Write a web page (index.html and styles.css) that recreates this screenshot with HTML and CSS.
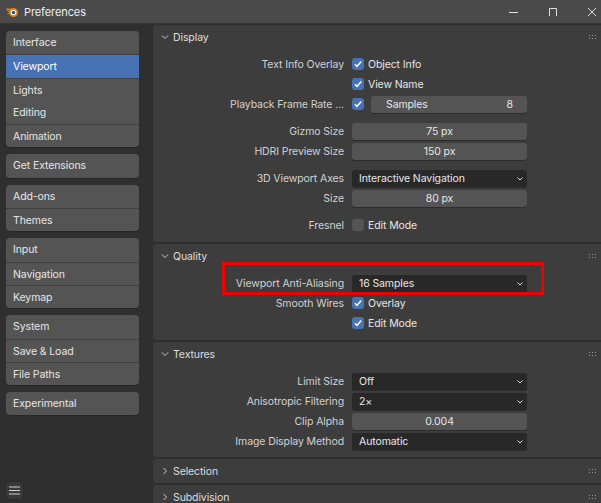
FILE: index.html
```html
<!DOCTYPE html>
<html lang="en">
<head>
    <meta charset="UTF-8">
    <title>Preferences</title>
    <link rel="stylesheet" href="styles.css">
</head>
<body>
<header class="titlebar">
    <svg class="logo" width="14" height="12" viewBox="0 0 14 12">
        <path d="M0.5 2.5 H6 L7 4 L2.5 4.5 L6 5.5 L1.5 8 L5 7.5 Z" fill="#e87d0d"/>
        <circle cx="8.5" cy="6.5" r="4.5" fill="#e87d0d"/>
        <circle cx="8.5" cy="6.5" r="2.8" fill="#ffffff"/>
        <circle cx="8.5" cy="6.5" r="1.7" fill="#265787"/>
    </svg>
    <span class="title">Preferences</span>
    <div class="win-controls">
        <svg width="10" height="10" viewBox="0 0 10 10"><path d="M0 5.5 H9" stroke="#e0e0e0" stroke-width="1"/></svg>
        <svg width="10" height="10" viewBox="0 0 10 10"><path d="M1.5 9 V1.5 H8.5 V9" fill="none" stroke="#e0e0e0" stroke-width="1"/></svg>
        <svg width="10" height="10" viewBox="0 0 10 10"><path d="M1 1 L9 9 M9 1 L1 9" stroke="#e0e0e0" stroke-width="1"/></svg>
    </div>
</header>

<div class="main">
    <nav class="sidebar">
        <div class="nav-group">
            <div class="nav-item">Interface</div>
            <div class="nav-item active">Viewport</div>
            <div class="nav-item no-sep">Lights</div>
            <div class="nav-item">Editing</div>
            <div class="nav-item">Animation</div>
        </div>
        <div class="nav-group">
            <div class="nav-item">Get Extensions</div>
        </div>
        <div class="nav-group">
            <div class="nav-item">Add-ons</div>
            <div class="nav-item">Themes</div>
        </div>
        <div class="nav-group">
            <div class="nav-item">Input</div>
            <div class="nav-item">Navigation</div>
            <div class="nav-item">Keymap</div>
        </div>
        <div class="nav-group">
            <div class="nav-item">System</div>
            <div class="nav-item">Save &amp; Load</div>
            <div class="nav-item">File Paths</div>
        </div>
        <div class="nav-group">
            <div class="nav-item">Experimental</div>
        </div>

        <div class="menu-btn">
            <svg width="11" height="9" viewBox="0 0 11 9"><path d="M0 1 H11 M0 4.5 H11 M0 8 H11" stroke="#cfcfcf" stroke-width="1"/></svg>
        </div>
    </nav>

    <div class="content">
        <!-- Display -->
        <section class="panel">
            <div class="panel-header">
                <svg class="chevron" width="8" height="6" viewBox="0 0 8 6"><path d="M1 1.5 L4 4.5 L7 1.5" fill="none" stroke="#cccccc" stroke-width="1"/></svg>
                <span>Display</span>
                <svg class="grip" width="7" height="4" viewBox="0 0 7 4"><path d="M0 0h1v1h-1zM3 0h1v1h-1zM6 0h1v1h-1zM0 3h1v1h-1zM3 3h1v1h-1zM6 3h1v1h-1z" fill="#9a9a9a"/></svg>
            </div>
            <div class="panel-body">
                <div class="prop-group">
                    <div class="prop-row">
                        <div class="prop-label">Text Info Overlay</div>
                        <label class="check"><span class="box on"></span>Object Info</label>
                    </div>
                    <div class="prop-row">
                        <div class="prop-label"></div>
                        <label class="check"><span class="box on"></span>View Name</label>
                    </div>
                    <div class="prop-row">
                        <div class="prop-label">Playback Frame Rate ...</div>
                        <div class="split">
                            <span class="box on"></span>
                            <div class="field num-split"><span>Samples</span><span>8</span></div>
                        </div>
                    </div>
                </div>
                <div class="prop-group">
                    <div class="prop-row">
                        <div class="prop-label">Gizmo Size</div>
                        <div class="field">75 px</div>
                    </div>
                    <div class="prop-row">
                        <div class="prop-label">HDRI Preview Size</div>
                        <div class="field">150 px</div>
                    </div>
                </div>
                <div class="prop-group">
                    <div class="prop-row">
                        <div class="prop-label">3D Viewport Axes</div>
                        <div class="dropdown">Interactive Navigation</div>
                    </div>
                    <div class="prop-row">
                        <div class="prop-label">Size</div>
                        <div class="field">80 px</div>
                    </div>
                </div>
                <div class="prop-group">
                    <div class="prop-row">
                        <div class="prop-label">Fresnel</div>
                        <label class="check"><span class="box"></span>Edit Mode</label>
                    </div>
                </div>
            </div>
        </section>

        <!-- Quality -->
        <section class="panel">
            <div class="panel-header">
                <svg class="chevron" width="8" height="6" viewBox="0 0 8 6"><path d="M1 1.5 L4 4.5 L7 1.5" fill="none" stroke="#cccccc" stroke-width="1"/></svg>
                <span>Quality</span>
                <svg class="grip" width="7" height="4" viewBox="0 0 7 4"><path d="M0 0h1v1h-1zM3 0h1v1h-1zM6 0h1v1h-1zM0 3h1v1h-1zM3 3h1v1h-1zM6 3h1v1h-1z" fill="#9a9a9a"/></svg>
            </div>
            <div class="panel-body">
                <div class="prop-row highlighted">
                    <div class="prop-label">Viewport Anti-Aliasing</div>
                    <div class="dropdown">16 Samples</div>
                    <div class="red-box"></div>
                </div>
                <div class="prop-row">
                    <div class="prop-label">Smooth Wires</div>
                    <label class="check"><span class="box on"></span>Overlay</label>
                </div>
                <div class="prop-row">
                    <div class="prop-label"></div>
                    <label class="check"><span class="box on"></span>Edit Mode</label>
                </div>
            </div>
        </section>

        <!-- Textures -->
        <section class="panel">
            <div class="panel-header">
                <svg class="chevron" width="8" height="6" viewBox="0 0 8 6"><path d="M1 1.5 L4 4.5 L7 1.5" fill="none" stroke="#cccccc" stroke-width="1"/></svg>
                <span>Textures</span>
                <svg class="grip" width="7" height="4" viewBox="0 0 7 4"><path d="M0 0h1v1h-1zM3 0h1v1h-1zM6 0h1v1h-1zM0 3h1v1h-1zM3 3h1v1h-1zM6 3h1v1h-1z" fill="#9a9a9a"/></svg>
            </div>
            <div class="panel-body tight">
                <div class="prop-row">
                    <div class="prop-label">Limit Size</div>
                    <div class="dropdown">Off</div>
                </div>
                <div class="prop-row">
                    <div class="prop-label">Anisotropic Filtering</div>
                    <div class="dropdown">2×</div>
                </div>
                <div class="prop-row">
                    <div class="prop-label">Clip Alpha</div>
                    <div class="field">0.004</div>
                </div>
                <div class="prop-row">
                    <div class="prop-label">Image Display Method</div>
                    <div class="dropdown">Automatic</div>
                </div>
            </div>
        </section>

        <!-- collapsed panels -->
        <section class="panel">
            <div class="panel-header">
                <svg class="chevron" width="8" height="8" viewBox="0 0 8 8"><path d="M2.5 1 L5.5 4 L2.5 7" fill="none" stroke="#cccccc" stroke-width="1"/></svg>
                <span>Selection</span>
                <svg class="grip" width="7" height="4" viewBox="0 0 7 4"><path d="M0 0h1v1h-1zM3 0h1v1h-1zM6 0h1v1h-1zM0 3h1v1h-1zM3 3h1v1h-1zM6 3h1v1h-1z" fill="#9a9a9a"/></svg>
            </div>
        </section>
        <section class="panel">
            <div class="panel-header">
                <svg class="chevron" width="8" height="8" viewBox="0 0 8 8"><path d="M2.5 1 L5.5 4 L2.5 7" fill="none" stroke="#cccccc" stroke-width="1"/></svg>
                <span>Subdivision</span>
                <svg class="grip" width="7" height="4" viewBox="0 0 7 4"><path d="M0 0h1v1h-1zM3 0h1v1h-1zM6 0h1v1h-1zM0 3h1v1h-1zM3 3h1v1h-1zM6 3h1v1h-1z" fill="#9a9a9a"/></svg>
            </div>
        </section>
    </div>
</div>
</body>
</html>
```

FILE: styles.css
```css
/* Base */
body {
    margin: 0;
    height: 503px;
    overflow: hidden;
    background-color: #2f2f2f;
    color: #e6e6e6;
    font-family: Inter, "DejaVu Sans", sans-serif;
    font-size: 10.5px;
    letter-spacing: -0.1px;
}

/* Title bar */
.titlebar {
    display: flex;
    align-items: center;
    height: 24px;
    padding-left: 5px;
    background-color: #4a4a4a;
    border-bottom: 1px solid #333333;
    box-sizing: border-box;
}

.titlebar .title {
    margin-left: 5px;
    color: #eeeeee;
    font-size: 11px;
}

.win-controls {
    display: flex;
    margin-left: auto;
    gap: 29px;
    padding-right: 4px;
}

/* Main layout */
.main {
    display: flex;
    height: 479px;
}

.sidebar {
    display: flex;
    flex-direction: column;
    gap: 7px;
    width: 133px;
    padding: 7px 14px 0 6px;
}

.nav-group {
    background-color: #545454;
    border-radius: 4px;
    overflow: hidden;
    box-shadow: 0 1px 0 #262626;
}

.nav-item {
    height: 23.3px;
    line-height: 23px;
    padding-left: 7px;
    box-sizing: border-box;
    border-top: 1px solid #3f3f3f;
}

.nav-item:first-child,
.nav-item.no-sep + .nav-item {
    border-top: none;
}

.nav-item.active {
    background-color: #4772b3;
    color: #ffffff;
}

.menu-btn {
    display: flex;
    align-items: center;
    justify-content: center;
    width: 17px;
    height: 17px;
    margin-top: auto;
    margin-bottom: 4px;
    background-color: #393939;
    border-radius: 4px;
    box-shadow: 0 0 0 1px #2a2a2a;
}

/* Panels */
.content {
    flex: 1;
    padding-top: 1px;
    margin-right: -7px;
}

.panel {
    background-color: #3d3d3d;
    border-radius: 4px;
    margin-bottom: 2px;
}

.panel-header {
    display: flex;
    align-items: center;
    height: 24px;
    padding-left: 8px;
    padding-right: 12px;
    color: #dddddd;
}

.panel-header .chevron {
    margin-right: 4px;
}

.panel-header .grip {
    margin-left: auto;
}

.panel-body {
    padding: 5px 0 7px;
}

.panel-body.tight {
    padding-bottom: 6px;
}

.prop-group + .prop-group {
    margin-top: 7px;
}

.prop-row {
    display: grid;
    grid-template-columns: 191px 175px;
    column-gap: 8px;
    align-items: center;
    height: 20px;
}

.prop-label {
    text-align: right;
    color: #d2d2d2;
    white-space: nowrap;
}

/* Widgets */
.box {
    display: inline-block;
    width: 12px;
    height: 12px;
    border-radius: 3px;
    background-color: #545454;
    box-sizing: border-box;
    flex-shrink: 0;
}

.box.on {
    background-color: #4772b3;
    background-image: url("data:image/svg+xml,%3Csvg xmlns='http://www.w3.org/2000/svg' width='12' height='12' viewBox='0 0 12 12'%3E%3Cpath d='M3 6.2 L5 8.4 L9.2 3.4' fill='none' stroke='white' stroke-width='1.5'/%3E%3C/svg%3E");
}

.check {
    display: flex;
    align-items: center;
    gap: 4px;
    color: #e6e6e6;
}

.split {
    display: flex;
    align-items: center;
    gap: 7px;
}

.field,
.dropdown {
    height: 17px;
    line-height: 17px;
    border-radius: 3px;
    box-sizing: border-box;
    box-shadow: 0 1px 0 #2c2c2c;
}

.field {
    background-color: #545454;
    text-align: center;
}

.num-split {
    flex: 1;
    display: flex;
    justify-content: space-between;
    padding: 0 14px 0 15px;
}

.dropdown {
    position: relative;
    background-color: #282828;
    padding-left: 7px;
}

.dropdown::after {
    content: "";
    position: absolute;
    right: 4px;
    top: 6px;
    width: 6px;
    height: 5px;
    background-image: url("data:image/svg+xml,%3Csvg xmlns='http://www.w3.org/2000/svg' width='6' height='5' viewBox='0 0 6 5'%3E%3Cpath d='M0.5 1.5 L3 4 L5.5 1.5' fill='none' stroke='%23dddddd' stroke-width='1'/%3E%3C/svg%3E");
}

/* Red highlight around the anti-aliasing row */
.highlighted {
    position: relative;
}

.red-box {
    position: absolute;
    left: 69px;
    top: -11px;
    width: 322px;
    height: 33px;
    border: 3px solid #f00000;
    box-sizing: border-box;
}
```
